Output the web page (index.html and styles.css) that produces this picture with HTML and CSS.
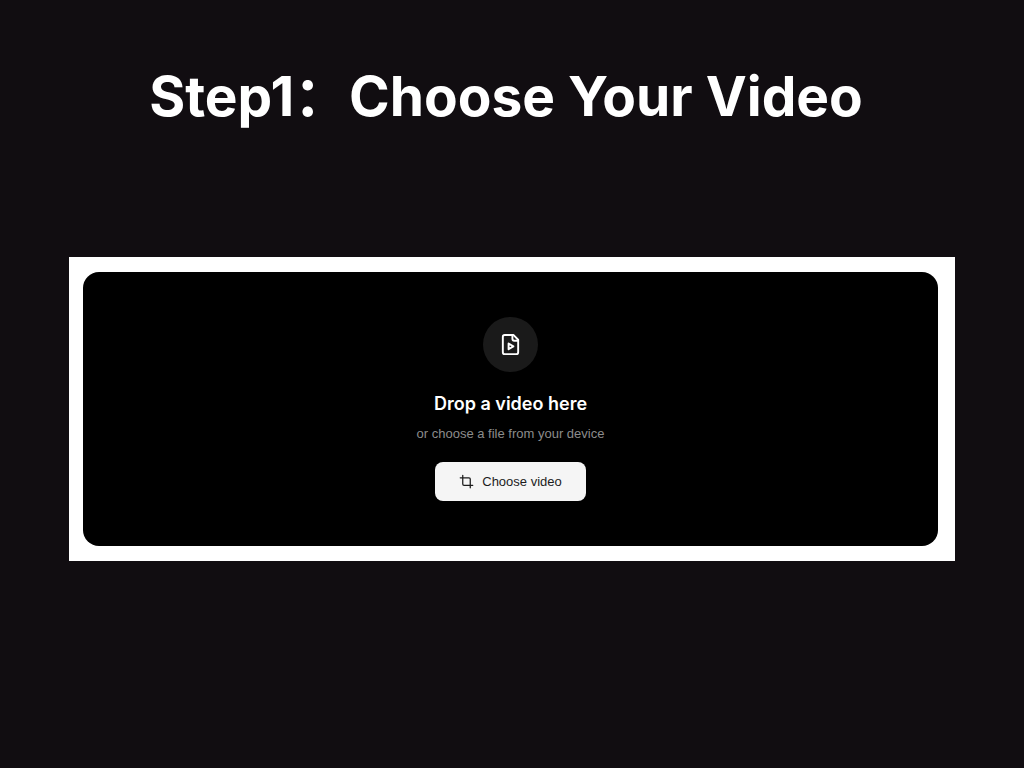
FILE: index.html
```
<!DOCTYPE html>
<html lang="en">
<head>
    <meta charset="UTF-8">
    <meta name="viewport" content="width=device-width, initial-scale=1.0">
    <title>Choose Your Video</title>
    <link rel="stylesheet" href="styles.css">
</head>
<body>
    <main class="step">
        <h1>Step1：Choose Your Video</h1>
        <div class="frame">
            <section class="dropzone">
                <div class="file-icon">
                    <svg width="23" height="23" viewBox="0 0 24 24" fill="none" stroke="currentColor" stroke-width="2" stroke-linecap="round" stroke-linejoin="round" aria-hidden="true">
                        <path d="M15 2H6a2 2 0 0 0-2 2v16a2 2 0 0 0 2 2h12a2 2 0 0 0 2-2V7Z"/>
                        <path d="M14 2v4a2 2 0 0 0 2 2h4"/>
                        <path d="m10 11 5 3-5 3v-6Z"/>
                    </svg>
                </div>
                <h2>Drop a video here</h2>
                <p>or choose a file from your device</p>
                <button type="button" class="choose-btn">
                    <svg width="15" height="15" viewBox="0 0 24 24" fill="none" stroke="currentColor" stroke-width="2" stroke-linecap="round" stroke-linejoin="round" aria-hidden="true">
                        <path d="M6 2v14a2 2 0 0 0 2 2h14"/>
                        <path d="M18 22V8a2 2 0 0 0-2-2H2"/>
                    </svg>
                    Choose video
                </button>
            </section>
        </div>
    </main>
</body>
</html>
```
FILE: styles.css
```
* {
    box-sizing: border-box;
}
body {
    margin: 0;
    background-color: #110d11;
    color: #fff;
    font-family: Inter, "Noto Sans CJK SC", sans-serif;
}
.step {
    padding: 61px 69px;
}
h1 {
    margin: 0 0 126px;
    padding-right: 12px;
    font-size: 55px;
    line-height: 70px;
    font-weight: 700;
    text-align: center;
}
.frame {
    padding: 15px 17px 15px 14px;
    background-color: #fff;
}
.dropzone {
    display: flex;
    flex-direction: column;
    align-items: center;
    padding: 45px 20px;
    background-color: #000;
    border-radius: 16px;
    font-family: "Liberation Sans", Arial, sans-serif;
}
.file-icon {
    display: flex;
    align-items: center;
    justify-content: center;
    width: 55px;
    height: 55px;
    margin-bottom: 18px;
    background-color: #1a1a1a;
    border-radius: 50%;
}
.dropzone h2 {
    margin: 0 0 6px;
    font-family: Inter, sans-serif;
    font-size: 18px;
    line-height: 28px;
    font-weight: 600;
}
.dropzone p {
    margin: 0 0 18px;
    color: #8c8c8c;
    font-size: 13px;
    line-height: 20px;
}
.choose-btn {
    display: flex;
    align-items: center;
    gap: 8px;
    height: 39px;
    padding: 0 24px;
    border: none;
    border-radius: 8px;
    background-color: #f5f5f5;
    color: #1c1c1c;
    font-family: inherit;
    font-size: 13px;
    font-weight: 500;
    cursor: pointer;
}
```
